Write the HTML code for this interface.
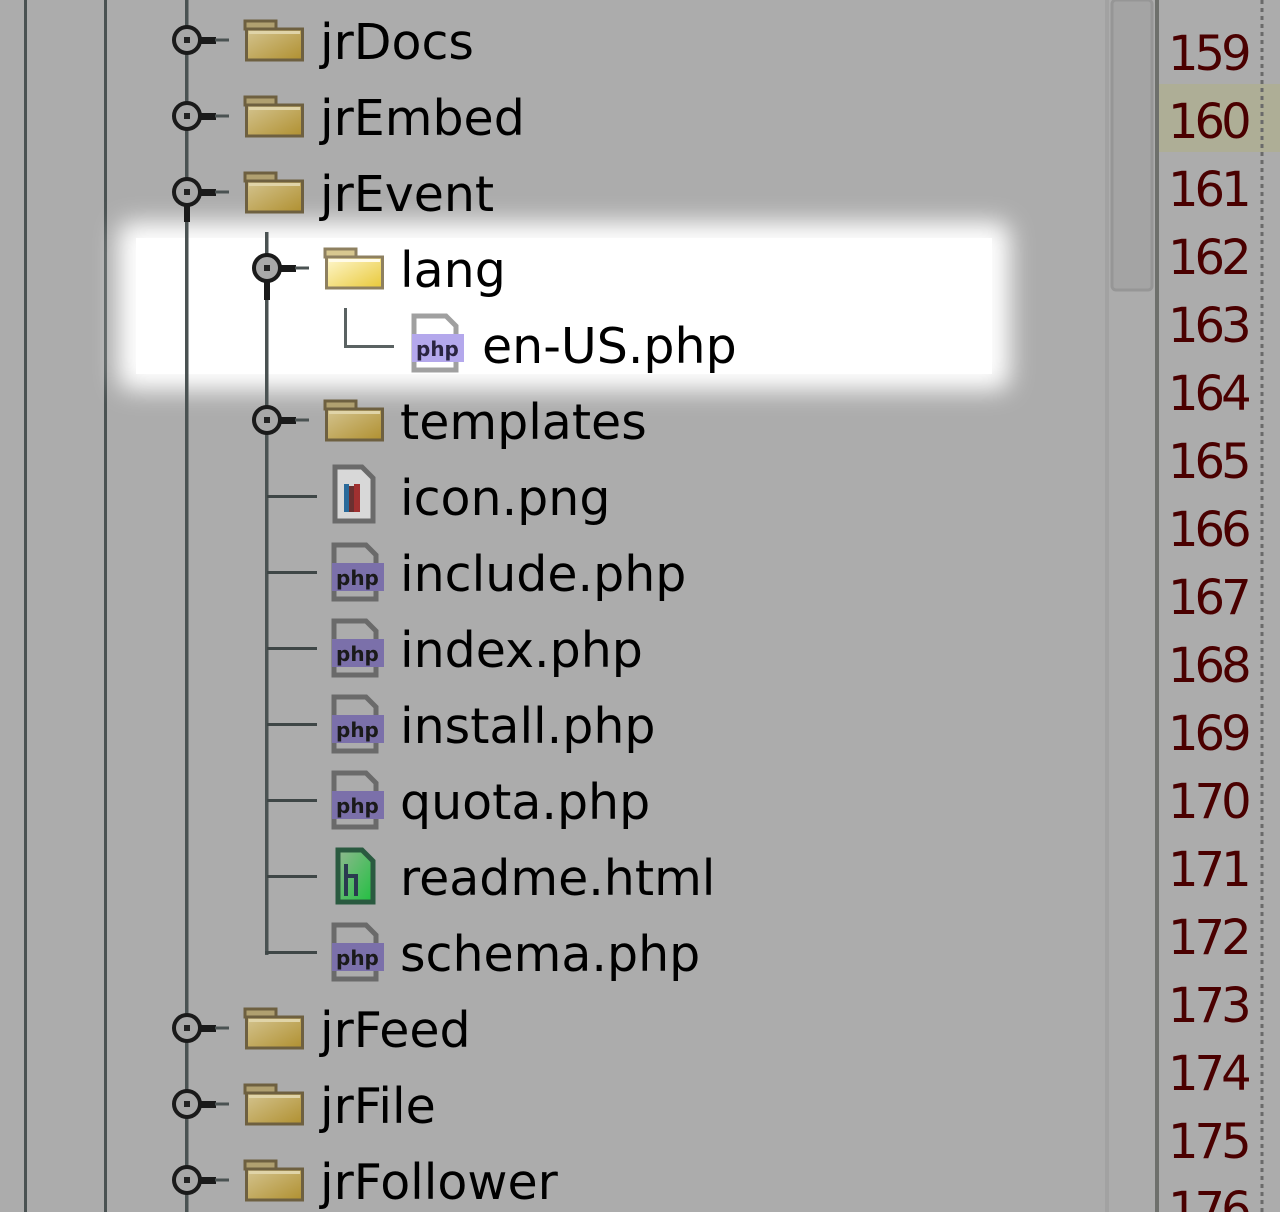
<!DOCTYPE html>
<html><head><meta charset="utf-8"><style>
html,body{margin:0;padding:0;background:#acacac;overflow:hidden}
svg{display:block}
text{font-family:"DejaVu Sans","Liberation Sans",sans-serif}
</style></head><body>
<svg width="1280" height="1212" viewBox="0 0 1280 1212" xmlns="http://www.w3.org/2000/svg">
<defs>
<linearGradient id="fg" x1="0" y1="0" x2="1" y2="1"><stop offset="0" stop-color="#d4c490"/><stop offset="1" stop-color="#b09030"/></linearGradient>
<linearGradient id="fgl" x1="0" y1="0" x2="1" y2="1"><stop offset="0" stop-color="#fff8d0"/><stop offset="1" stop-color="#e8c838"/></linearGradient>
<linearGradient id="hg" x1="0" y1="0" x2="1" y2="1"><stop offset="0" stop-color="#90b890"/><stop offset="1" stop-color="#20c040"/></linearGradient>
<filter id="blur" x="-10%" y="-30%" width="120%" height="160%"><feGaussianBlur stdDeviation="12"/></filter>
<g id="folder">
<rect x="0" y="2" width="31" height="8" fill="#b0a070" stroke="#6e6040" stroke-width="3"/>
<rect x="1.5" y="10" width="56" height="31" fill="url(#fg)" stroke="#6e6040" stroke-width="3"/>
<rect x="4" y="12" width="51" height="3" fill="#e0d4a8"/>
</g>
<g id="folderL">
<rect x="0" y="2" width="31" height="8" fill="#d8c890" stroke="#8e8060" stroke-width="3"/>
<rect x="1.5" y="10" width="56" height="31" fill="url(#fgl)" stroke="#8e8060" stroke-width="3"/>
<rect x="4" y="12" width="51" height="3" fill="#fffbe8"/>
</g>
<g id="exp">
<circle cx="0" cy="0" r="13" fill="#a8a8a8" stroke="#1a1a1a" stroke-width="4"/>
<rect x="-3" y="-3" width="6" height="6" fill="#222"/>
<rect x="13" y="-3" width="16" height="7" fill="#1a1a1a"/>
<rect x="28" y="-1.5" width="14" height="3" fill="#4a5252"/>
</g>
<g id="php">
<path d="M2 2 H34 L44 12 V56 H2 Z" fill="#acacac" stroke="#6a6a6a" stroke-width="5"/>
<rect x="0" y="20" width="52" height="28" fill="#7b70aa"/>
</g>
<g id="phpL">
<path d="M2 2 H34 L44 12 V56 H2 Z" fill="#fff" stroke="#a0a0a0" stroke-width="5"/>
<rect x="0" y="20" width="52" height="28" fill="#b4a8ec"/>
</g>
</defs>

<rect x="24" y="0" width="3" height="1212" fill="#4a5252"/>
<rect x="104" y="0" width="3" height="1212" fill="#4a5252"/>

<rect x="1105" y="0" width="4" height="1212" fill="#a2a2a2"/>
<rect x="1112" y="0" width="40" height="290" rx="4" fill="#a4a4a4" stroke="#969696" stroke-width="3"/>
<rect x="1155" y="0" width="4" height="1212" fill="#6e706c"/>
<rect x="1159" y="84" width="121" height="68" fill="#aeae96"/>
<line x1="1262" y1="0" x2="1262" y2="1212" stroke="#6a6a6a" stroke-width="3" stroke-dasharray="4 4"/>
<g fill="#4a0000" font-size="48" font-family="DejaVu Sans,sans-serif" letter-spacing="-4">
<text x="1168" y="-6">158</text>
<text x="1168" y="70">159</text>
<text x="1168" y="138">160</text>
<text x="1168" y="206">161</text>
<text x="1168" y="274">162</text>
<text x="1168" y="342">163</text>
<text x="1168" y="410">164</text>
<text x="1168" y="478">165</text>
<text x="1168" y="546">166</text>
<text x="1168" y="614">167</text>
<text x="1168" y="682">168</text>
<text x="1168" y="750">169</text>
<text x="1168" y="818">170</text>
<text x="1168" y="886">171</text>
<text x="1168" y="954">172</text>
<text x="1168" y="1022">173</text>
<text x="1168" y="1090">174</text>
<text x="1168" y="1158">175</text>
<text x="1168" y="1226">176</text>
</g>

<rect x="118" y="222" width="892" height="168" rx="14" fill="#ffffff" filter="url(#blur)"/>
<rect x="136" y="238" width="856" height="136" fill="#ffffff"/>

<rect x="185" y="0" width="3.5" height="1212" fill="#4a5252"/>
<rect x="184" y="200" width="6" height="22" fill="#1a1a1a"/>
<rect x="265" y="232" width="3.5" height="723" fill="#4a5252"/>
<rect x="264" y="278" width="6" height="22" fill="#1a1a1a"/>

<use href="#exp" x="187" y="40"/><use href="#folder" x="245" y="19"/>
<use href="#exp" x="187" y="116"/><use href="#folder" x="245" y="95"/>
<use href="#exp" x="187" y="192"/><use href="#folder" x="245" y="171"/>
<use href="#exp" x="187" y="1028"/><use href="#folder" x="245" y="1007"/>
<use href="#exp" x="187" y="1104"/><use href="#folder" x="245" y="1083"/>
<use href="#exp" x="187" y="1180"/><use href="#folder" x="245" y="1159"/>

<use href="#exp" x="267" y="268"/><use href="#folderL" x="325" y="247"/>
<use href="#exp" x="267" y="420"/><use href="#folder" x="325" y="399"/>
<g fill="#3e4646">
<rect x="267" y="495" width="50" height="3"/>
<rect x="267" y="571" width="50" height="3"/>
<rect x="267" y="647" width="50" height="3"/>
<rect x="267" y="723" width="50" height="3"/>
<rect x="267" y="799" width="50" height="3"/>
<rect x="267" y="875" width="50" height="3"/>
<rect x="265" y="951" width="52" height="3"/>
</g>
<rect x="344" y="308" width="3" height="40" fill="#5a6262"/>
<rect x="344" y="345" width="50" height="3" fill="#5a6262"/>
<use href="#phpL" x="412" y="314"/>
<text x="416" y="356" font-size="20" font-weight="bold" fill="#2a2440">php</text>

<path d="M335 467 H362 L373 478 V521 H335 Z" fill="#d8d8d8" stroke="#6a6a6a" stroke-width="5"/>
<rect x="344" y="484" width="5" height="28" fill="#2a6a9a"/>
<rect x="349" y="486" width="5" height="26" fill="#6a3030"/>
<rect x="354" y="484" width="6" height="28" fill="#a03030"/>
<use href="#php" x="332" y="543"/><text x="336" y="585" font-size="20" font-weight="bold" fill="#1a1a1a">php</text>
<use href="#php" x="332" y="619"/><text x="336" y="661" font-size="20" font-weight="bold" fill="#1a1a1a">php</text>
<use href="#php" x="332" y="695"/><text x="336" y="737" font-size="20" font-weight="bold" fill="#1a1a1a">php</text>
<use href="#php" x="332" y="771"/><text x="336" y="813" font-size="20" font-weight="bold" fill="#1a1a1a">php</text>
<use href="#php" x="332" y="923"/><text x="336" y="965" font-size="20" font-weight="bold" fill="#1a1a1a">php</text>
<path d="M338 850 H362 L373 861 V902 H338 Z" fill="url(#hg)" stroke="#2a5a40" stroke-width="5"/>
<rect x="344" y="864" width="4" height="32" fill="#2a3a50"/>
<path d="M348 876 H356 V896" fill="none" stroke="#2a3a50" stroke-width="4"/>

<g font-size="49" fill="#000">
<text x="320" y="59">jrDocs</text>
<text x="320" y="135">jrEmbed</text>
<text x="320" y="211">jrEvent</text>
<text x="400" y="287">lang</text>
<text x="482" y="363">en-US.php</text>
<text x="400" y="439">templates</text>
<text x="400" y="515">icon.png</text>
<text x="400" y="591">include.php</text>
<text x="400" y="667">index.php</text>
<text x="400" y="743">install.php</text>
<text x="400" y="819">quota.php</text>
<text x="400" y="895">readme.html</text>
<text x="400" y="971">schema.php</text>
<text x="320" y="1047">jrFeed</text>
<text x="320" y="1123">jrFile</text>
<text x="320" y="1199">jrFollower</text>
</g>
</svg>
</body></html>
